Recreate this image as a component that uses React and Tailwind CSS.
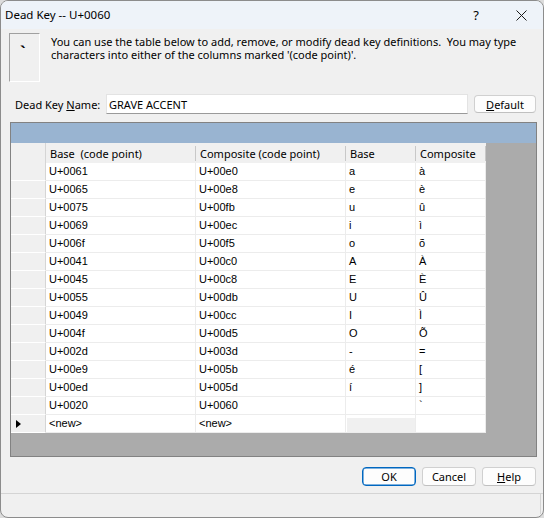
import React from "react";

const rows = [
  ["U+0061", "U+00e0", "a", "à"],
  ["U+0065", "U+00e8", "e", "è"],
  ["U+0075", "U+00fb", "u", "û"],
  ["U+0069", "U+00ec", "i", "ì"],
  ["U+006f", "U+00f5", "o", "õ"],
  ["U+0041", "U+00c0", "A", "À"],
  ["U+0045", "U+00c8", "E", "È"],
  ["U+0055", "U+00db", "U", "Û"],
  ["U+0049", "U+00cc", "I", "Ì"],
  ["U+004f", "U+00d5", "O", "Õ"],
  ["U+002d", "U+003d", "-", "="],
  ["U+00e9", "U+005b", "é", "["],
  ["U+00ed", "U+005d", "í", "]"],
  ["U+0020", "U+0060", " ", "`"],
];

function Btn({ children, primary }) {
  return (
    <div
      className={
        "w-[54px] h-[19px] rounded-[4px] flex items-center justify-center bg-[#fdfdfd] border " +
        (primary ? "border-[#0067c0] shadow-[inset_0_0_0_0.5px_#0067c0]" : "border-[#d0d0d0] border-b-[#c0c0c0]")
      }
    >
      {children}
    </div>
  );
}

export default function App() {
  return (
    <div className="w-[544px] h-[518px] bg-[#dcdcdc] font-['Noto_Sans',sans-serif] text-[11px] text-black leading-none">
      <div className="w-full h-full flex flex-col bg-[#f0f0f0] rounded-[8px] border border-[#8c8c8c] overflow-hidden">
        {/* title bar */}
        <div className="h-[28px] shrink-0 bg-[#eef3f9] flex items-center">
          <span className="pl-[4px] text-[11.5px]">Dead Key -- U+0060</span>
          <div className="ml-auto flex h-full">
            <div className="w-[46px] flex items-center justify-center text-[13px]">?</div>
            <div className="w-[44px] flex items-center justify-center">
              <svg width="11" height="11" viewBox="0 0 11 11">
                <path d="M0.5 0.5 L10.5 10.5 M10.5 0.5 L0.5 10.5" stroke="#1a1a1a" strokeWidth="1" />
              </svg>
            </div>
          </div>
        </div>

        {/* description */}
        <div className="mt-[4px] flex pl-[8px]">
          <div className="w-[31px] h-[49px] border border-[#a0a0a0] border-r-white border-b-white flex">
            <span className="pl-[10px] pt-[10px] text-[15px] font-bold leading-none">`</span>
          </div>
          <div className="ml-[11px] pt-[2px] leading-[13px] whitespace-pre">
            {"You can use the table below to add, remove, or modify dead key definitions.  You may type"}
            <br />
            {"characters into either of the columns marked '(code point)'."}
          </div>
        </div>

        {/* name row */}
        <div className="mt-[12px] flex items-center h-[20px]">
          <div className="w-[105px] pl-[14px]">
            Dead Key <span className="underline">N</span>ame:
          </div>
          <div className="w-[362px] h-[20px] bg-white border border-[#e3e3e3] border-b-[#9a9a9a] flex items-center pl-[2px]">
            GRAVE ACCENT
          </div>
          <div className="ml-[6px] w-[62px] h-[18px] rounded-[4px] bg-[#fdfdfd] border border-[#d0d0d0] border-b-[#c0c0c0] flex items-center justify-center">
            <span className="underline">D</span>efault
          </div>
        </div>

        {/* grid */}
        <div className="mt-[8px] ml-[9px] w-[527px] h-[335px] border border-[#828282] bg-[#ababab] flex flex-col">
          <div className="h-[20px] shrink-0 bg-[#99b4d1]" />
          <div className="h-[20px] shrink-0 flex">
            <div className="w-[35px] bg-[#f0f0f0] border-r border-[#d5d5d5]" />
            {[
              ["Base  (code point)", "w-[150px]"],
              ["Composite (code point)", "w-[150px]"],
              ["Base", "w-[70px]"],
              ["Composite", "w-[70px]"],
            ].map(([t, w], i) => (
              <div key={i} className={w + " bg-[#f0f0f0] flex items-center"}>
                <span className="flex-1 pl-[4px] whitespace-pre">{t}</span>
                <div className="w-px h-[15px] bg-[#c8c8c8]" />
              </div>
            ))}
          </div>
          <div className="font-['Liberation_Sans',Arial,sans-serif] text-[11px]">
            {rows.map((r, i) => (
              <div key={i} className="h-[18px] flex">
                <div className="w-[35px] bg-[#f0f0f0] border-r border-[#d5d5d5] border-b border-b-[#ffffff]" />
                {r.map((c, j) => (
                  <div
                    key={j}
                    className={
                      (j < 2 ? "w-[150px]" : "w-[70px]") +
                      " bg-white border-r border-b border-[#ececec] pl-[3px] flex items-center whitespace-pre"
                    }
                  >
                    {c}
                  </div>
                ))}
              </div>
            ))}
            <div className="h-[18px] flex">
              <div className="w-[35px] bg-[#f0f0f0] border-r border-[#d5d5d5] border-b border-b-[#ffffff] flex items-center pl-[5px]">
                <svg width="5" height="8" viewBox="0 0 5 8">
                  <polygon points="0,0 5,4 0,8" fill="#000" />
                </svg>
              </div>
              <div className="w-[150px] bg-white border-r border-b border-[#ececec] pl-[3px] flex items-center">{"<new>"}</div>
              <div className="w-[150px] bg-white border-r border-b border-[#ececec] pl-[3px] flex items-center">{"<new>"}</div>
              <div className="w-[70px] bg-white border-r border-b border-[#ececec] pt-[3px] pl-[1px]">
                <div className="h-full bg-[#f0f0f0]" />
              </div>
              <div className="w-[70px] bg-white border-r border-b border-[#ececec]" />
            </div>
          </div>
        </div>

        {/* buttons */}
        <div className="mt-[10px] flex justify-end pr-[7px] gap-[6px]">
          <Btn primary>OK</Btn>
          <Btn>Cancel</Btn>
          <Btn>
            <span>
              <span className="underline">H</span>elp
            </span>
          </Btn>
        </div>

        {/* status bar */}
        <div className="mt-[7px] flex-1 border-t border-[#d4d4d4] flex">
          <div className="ml-auto mr-[2px] h-[20px] border-r border-[#d4d4d4]" />
        </div>
      </div>
    </div>
  );
}
